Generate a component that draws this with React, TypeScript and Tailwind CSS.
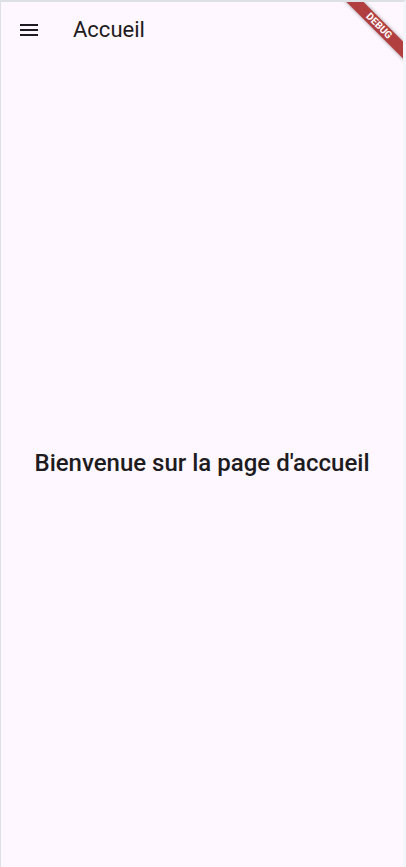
const DebugBanner = () => {
    return (
        <div className="pointer-events-none absolute top-0 right-0 w-[80px] h-[80px] overflow-hidden">
            <div className="absolute left-[6px] top-[18px] w-[100px] h-[12px] rotate-45 bg-[#b13f3f] shadow-[0_0_4px_rgba(0,0,0,0.4)] flex items-center justify-center">
                <span className="text-white font-bold text-[10px] leading-none">DEBUG</span>
            </div>
        </div>
    );
};

export default function App() {
    return (
        <div
            className="relative h-[867px] w-full bg-[#fef7ff] border-t-2 border-l border-r-[3px] border-[#dde0e5] border-r-[#f5f6fb] flex flex-col text-[#1d1b20] overflow-hidden"
            style={{ fontFamily: "Roboto, 'Noto Sans', sans-serif" }}
        >
            <header className="h-[56px] shrink-0 flex items-center">
                <div className="w-[56px] h-[56px] flex items-center justify-center">
                    <svg width="24" height="24" viewBox="0 0 24 24" className="fill-[#1d1b20]">
                        <path d="M3 18h18v-2H3v2zm0-5h18v-2H3v2zm0-7v2h18V6H3z" />
                    </svg>
                </div>
                <h1 className="ml-[16px] text-[22px] font-normal leading-none">Accueil</h1>
            </header>

            <main className="flex-1 flex items-center justify-center">
                <p className="text-[24px] font-medium">Bienvenue sur la page d'accueil</p>
            </main>

            <DebugBanner />
        </div>
    );
}
